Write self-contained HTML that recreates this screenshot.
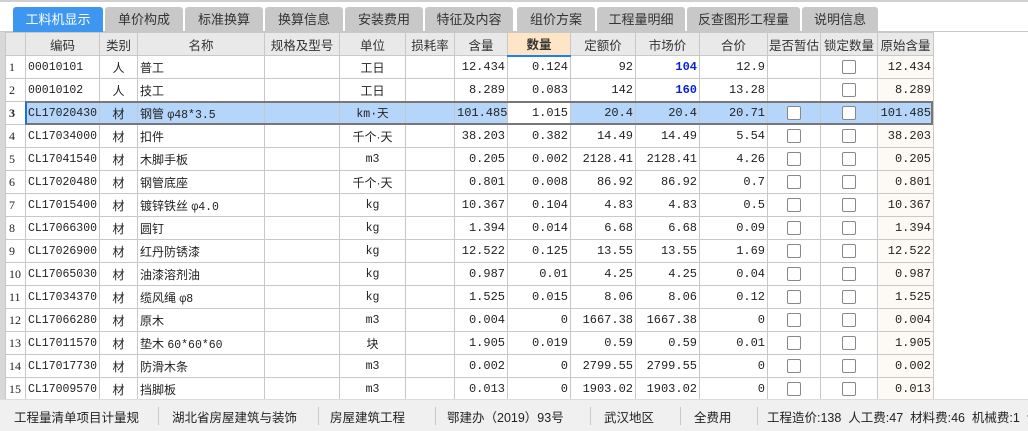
<!DOCTYPE html>
<html><head><meta charset="utf-8"><style>
*{margin:0;padding:0;box-sizing:border-box}
body{width:1028px;height:431px;overflow:hidden;background:#fff;font-family:"Liberation Sans","Noto Sans CJK SC",sans-serif;font-size:13px;color:#222;position:relative}
.top{position:absolute;left:0;top:0;width:1028px;height:2px;background:#d0d0d0}
.tabbar{position:absolute;left:0;top:2px;width:1028px;height:30px;background:#fff;border-bottom:1px solid #c8c8c8}
.tab{position:absolute;top:5px;height:25px;background:#c8c8c8;color:#333;text-align:center;line-height:25px;font-size:13px;border-radius:3px 3px 0 0}
.tab.a{background:#3d97f0;color:#fff}
.lm{position:absolute;left:0;top:32px;width:5px;height:367px;background:#d8d8d8}
table{position:absolute;left:5px;top:32px;width:928px;border-collapse:collapse;table-layout:fixed}
td,th{border:1px solid #c8c8c8;height:23px;padding:0 2px;white-space:nowrap;overflow:hidden;font-weight:normal}
th{background:#e9e9e9;text-align:center;font-size:12.5px;color:#333;padding:0}
th.q{background:#fde5c6;font-weight:bold;border-bottom:2px solid #1f7ef0}
td{font-size:12px}
.n{font-family:"Liberation Mono",monospace;font-size:12px;text-align:right}
.c{text-align:center}
.l{font-family:"Liberation Mono",monospace;font-size:11.5px}
.rn{font-family:"Liberation Serif",serif;font-size:12px;padding-left:3px}
.o{background:#fdfaf6}
.b{color:#0a1fdc;font-weight:bold}
.cb{display:inline-block;width:14px;height:14px;border:1px solid #888;border-radius:2px;background:#fff;vertical-align:middle}
tr.s td{background:#b5d5fb}
tr.s td.w{background:#fff}
.selb{position:absolute;left:25px;top:101px;width:908px;height:24px;border:2px solid #777;pointer-events:none}
.selm{position:absolute;left:25px;top:102px;width:2px;height:22px;background:#1f6fe0}
.status{position:absolute;left:0;top:399px;width:1028px;height:32px;background:#f0f0f0;border-top:1px solid #dcdcdc;font-size:12.5px;color:#222;white-space:nowrap;overflow:hidden}
.status span{position:absolute;top:7px;white-space:nowrap}
.sep{position:absolute;top:7px;width:1px;height:18px;background:#c8c8c8}
</style></head><body>
<div class="top"></div>
<div class="tabbar">
<div class="tab a" style="left:13px;width:90px">工料机显示</div>
<div class="tab" style="left:105px;width:78px">单价构成</div>
<div class="tab" style="left:185px;width:78px">标准换算</div>
<div class="tab" style="left:265px;width:78px">换算信息</div>
<div class="tab" style="left:345px;width:78px">安装费用</div>
<div class="tab" style="left:425px;width:88px">特征及内容</div>
<div class="tab" style="left:517px;width:78px">组价方案</div>
<div class="tab" style="left:597px;width:88px">工程量明细</div>
<div class="tab" style="left:687px;width:113px">反查图形工程量</div>
<div class="tab" style="left:802px;width:76px">说明信息</div>
</div>
<div class="lm"></div>
<table>
<colgroup><col style="width:20px"><col style="width:74px"><col style="width:38px"><col style="width:127px"><col style="width:75px"><col style="width:66px"><col style="width:49px"><col style="width:53px"><col style="width:63px"><col style="width:65px"><col style="width:64px"><col style="width:68px"><col style="width:53px"><col style="width:57px"><col style="width:56px"></colgroup>
<tr><th></th><th>编码</th><th>类别</th><th>名称</th><th>规格及型号</th><th>单位</th><th>损耗率</th><th>含量</th><th class="q">数量</th><th>定额价</th><th>市场价</th><th>合价</th><th>是否暂估</th><th>锁定数量</th><th>原始含量</th></tr>
<tr><td class="rn">1</td><td class="l">00010101</td><td class="c">人</td><td>普工</td><td></td><td class="c">工日</td><td></td><td class="n">12.434</td><td class="n">0.124</td><td class="n">92</td><td class="n b">104</td><td class="n">12.9</td><td></td><td class="c"><span class="cb"></span></td><td class="n o">12.434</td></tr>
<tr><td class="rn">2</td><td class="l">00010102</td><td class="c">人</td><td>技工</td><td></td><td class="c">工日</td><td></td><td class="n">8.289</td><td class="n">0.083</td><td class="n">142</td><td class="n b">160</td><td class="n">13.28</td><td></td><td class="c"><span class="cb"></span></td><td class="n o">8.289</td></tr>
<tr class="s"><td class="rn w"><b>3</b></td><td class="l">CL17020430</td><td class="c">材</td><td>钢管 <span class="l">φ48*3.5</span></td><td></td><td class="c l">km·天</td><td></td><td class="n">101.485</td><td class="n w">1.015</td><td class="n">20.4</td><td class="n">20.4</td><td class="n">20.71</td><td class="c"><span class="cb"></span></td><td class="c"><span class="cb"></span></td><td class="n">101.485</td></tr>
<tr><td class="rn">4</td><td class="l">CL17034000</td><td class="c">材</td><td>扣件</td><td></td><td class="c">千个·天</td><td></td><td class="n">38.203</td><td class="n">0.382</td><td class="n">14.49</td><td class="n">14.49</td><td class="n">5.54</td><td class="c"><span class="cb"></span></td><td class="c"><span class="cb"></span></td><td class="n o">38.203</td></tr>
<tr><td class="rn">5</td><td class="l">CL17041540</td><td class="c">材</td><td>木脚手板</td><td></td><td class="c l">m3</td><td></td><td class="n">0.205</td><td class="n">0.002</td><td class="n">2128.41</td><td class="n">2128.41</td><td class="n">4.26</td><td class="c"><span class="cb"></span></td><td class="c"><span class="cb"></span></td><td class="n o">0.205</td></tr>
<tr><td class="rn">6</td><td class="l">CL17020480</td><td class="c">材</td><td>钢管底座</td><td></td><td class="c">千个·天</td><td></td><td class="n">0.801</td><td class="n">0.008</td><td class="n">86.92</td><td class="n">86.92</td><td class="n">0.7</td><td class="c"><span class="cb"></span></td><td class="c"><span class="cb"></span></td><td class="n o">0.801</td></tr>
<tr><td class="rn">7</td><td class="l">CL17015400</td><td class="c">材</td><td>镀锌铁丝 <span class="l">φ4.0</span></td><td></td><td class="c l">kg</td><td></td><td class="n">10.367</td><td class="n">0.104</td><td class="n">4.83</td><td class="n">4.83</td><td class="n">0.5</td><td class="c"><span class="cb"></span></td><td class="c"><span class="cb"></span></td><td class="n o">10.367</td></tr>
<tr><td class="rn">8</td><td class="l">CL17066300</td><td class="c">材</td><td>圆钉</td><td></td><td class="c l">kg</td><td></td><td class="n">1.394</td><td class="n">0.014</td><td class="n">6.68</td><td class="n">6.68</td><td class="n">0.09</td><td class="c"><span class="cb"></span></td><td class="c"><span class="cb"></span></td><td class="n o">1.394</td></tr>
<tr><td class="rn">9</td><td class="l">CL17026900</td><td class="c">材</td><td>红丹防锈漆</td><td></td><td class="c l">kg</td><td></td><td class="n">12.522</td><td class="n">0.125</td><td class="n">13.55</td><td class="n">13.55</td><td class="n">1.69</td><td class="c"><span class="cb"></span></td><td class="c"><span class="cb"></span></td><td class="n o">12.522</td></tr>
<tr><td class="rn">10</td><td class="l">CL17065030</td><td class="c">材</td><td>油漆溶剂油</td><td></td><td class="c l">kg</td><td></td><td class="n">0.987</td><td class="n">0.01</td><td class="n">4.25</td><td class="n">4.25</td><td class="n">0.04</td><td class="c"><span class="cb"></span></td><td class="c"><span class="cb"></span></td><td class="n o">0.987</td></tr>
<tr><td class="rn">11</td><td class="l">CL17034370</td><td class="c">材</td><td>缆风绳 <span class="l">φ8</span></td><td></td><td class="c l">kg</td><td></td><td class="n">1.525</td><td class="n">0.015</td><td class="n">8.06</td><td class="n">8.06</td><td class="n">0.12</td><td class="c"><span class="cb"></span></td><td class="c"><span class="cb"></span></td><td class="n o">1.525</td></tr>
<tr><td class="rn">12</td><td class="l">CL17066280</td><td class="c">材</td><td>原木</td><td></td><td class="c l">m3</td><td></td><td class="n">0.004</td><td class="n">0</td><td class="n">1667.38</td><td class="n">1667.38</td><td class="n">0</td><td class="c"><span class="cb"></span></td><td class="c"><span class="cb"></span></td><td class="n o">0.004</td></tr>
<tr><td class="rn">13</td><td class="l">CL17011570</td><td class="c">材</td><td>垫木 <span class="l">60*60*60</span></td><td></td><td class="c">块</td><td></td><td class="n">1.905</td><td class="n">0.019</td><td class="n">0.59</td><td class="n">0.59</td><td class="n">0.01</td><td class="c"><span class="cb"></span></td><td class="c"><span class="cb"></span></td><td class="n o">1.905</td></tr>
<tr><td class="rn">14</td><td class="l">CL17017730</td><td class="c">材</td><td>防滑木条</td><td></td><td class="c l">m3</td><td></td><td class="n">0.002</td><td class="n">0</td><td class="n">2799.55</td><td class="n">2799.55</td><td class="n">0</td><td class="c"><span class="cb"></span></td><td class="c"><span class="cb"></span></td><td class="n o">0.002</td></tr>
<tr><td class="rn">15</td><td class="l">CL17009570</td><td class="c">材</td><td>挡脚板</td><td></td><td class="c l">m3</td><td></td><td class="n">0.013</td><td class="n">0</td><td class="n">1903.02</td><td class="n">1903.02</td><td class="n">0</td><td class="c"><span class="cb"></span></td><td class="c"><span class="cb"></span></td><td class="n o">0.013</td></tr>
</table>
<div class="selb"></div><div class="selm"></div>
<div class="status">
<span style="left:14px;width:130px;overflow:hidden">工程量清单项目计量规</span><div class="sep" style="left:158px"></div>
<span style="left:172px;width:130px;overflow:hidden">湖北省房屋建筑与装饰</span><div class="sep" style="left:318px"></div>
<span style="left:330px">房屋建筑工程</span><div class="sep" style="left:435px"></div>
<span style="left:447px">鄂建办（2019）93号</span><div class="sep" style="left:590px"></div>
<span style="left:604px">武汉地区</span><div class="sep" style="left:680px"></div>
<span style="left:694px">全费用</span><div class="sep" style="left:757px"></div>
<span style="left:767px">工程造价:138&nbsp; 人工费:47&nbsp; 材料费:46&nbsp; 机械费:1&nbsp; 设</span>
</div>
</body></html>
